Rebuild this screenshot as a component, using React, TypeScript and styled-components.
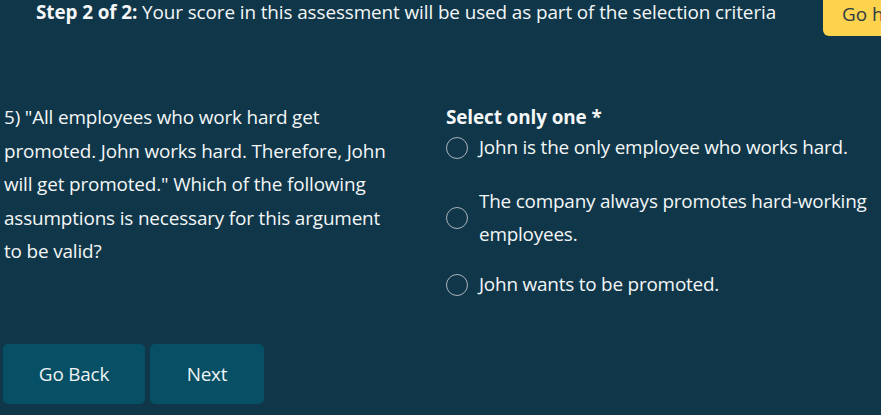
import React from "react";
import styled, { createGlobalStyle } from "styled-components";

const Global = createGlobalStyle`
  html, body { margin: 0; padding: 0; background: #0f3749; overflow: hidden; }
  body { font-family: "Open Sans", "Noto Sans", sans-serif; color: #f4f6f7; }
  * { box-sizing: border-box; }
`;

const Page = styled.div`
  width: 881px;
  height: 415px;
  background: #0f3749;
  overflow: hidden;
  display: flex;
  flex-direction: column;
`;

const Header = styled.header`
  display: flex;
  align-items: flex-start;
  justify-content: space-between;
  height: 36px;
`;

const StepText = styled.p`
  margin: 0;
  padding: 0 0 0 36px;
  font-size: 18.9px;
  line-height: 24px;
  letter-spacing: -0.1px;
  white-space: nowrap;
  b { font-weight: 700; }
`;

const HelpButton = styled.button`
  flex: none;
  width: 110px;
  height: 36px;
  margin-right: -52px;
  border: none;
  border-radius: 0 0 0 6px;
  background: #fdd34e;
  color: #2c3a45;
  font-family: inherit;
  font-size: 18.9px;
  text-align: left;
  padding: 0 0 9px 19px;
  white-space: nowrap;
  overflow: hidden;
`;

const Body = styled.main`
  display: grid;
  grid-template-columns: 442px 1fr;
  padding: 65px 0 0 4px;
`;

const Question = styled.p`
  margin: 0;
  width: 393px;
  font-size: 18.9px;
  line-height: 33.6px;
  letter-spacing: -0.15px;
`;

const Options = styled.fieldset`
  margin: 0;
  padding: 0;
  border: none;
  display: flex;
  flex-direction: column;
`;

const Legend = styled.legend`
  padding: 0;
  font-size: 18.9px;
  font-weight: 700;
  line-height: 33px;
  letter-spacing: -0.1px;
`;

const Option = styled.label<{ $top: number; $bottom: number }>`
  display: flex;
  align-items: center;
  gap: 11px;
  margin-top: ${(p) => p.$top}px;
  margin-bottom: ${(p) => p.$bottom}px;
`;

const Radio = styled.span`
  flex: none;
  width: 22px;
  height: 22px;
  border-radius: 50%;
  border: 1.5px solid #aab4b9;
`;

const OptionText = styled.span`
  font-size: 18.9px;
  line-height: 33px;
  letter-spacing: -0.2px;
  width: 395px;
`;

const Actions = styled.div`
  display: flex;
  gap: 5px;
  padding: 0 0 0 3px;
  margin-top: auto;
  margin-bottom: 11px;
`;

const NavButton = styled.button<{ $w: number }>`
  width: ${(p) => p.$w}px;
  height: 60px;
  border: none;
  border-radius: 5px;
  background: #074f64;
  color: #eef3f5;
  font-family: inherit;
  font-size: 18.9px;
  letter-spacing: -0.2px;
`;

export default function App() {
  return (
    <Page>
      <Global />
      <Header>
        <StepText>
          <b>Step 2 of 2:</b> Your score in this assessment will be used as part of the selection criteria
        </StepText>
        <HelpButton>Go home</HelpButton>
      </Header>
      <Body>
        <Question>
          5) "All employees who work hard get promoted. John works hard. Therefore, John will get promoted." Which of the following assumptions is necessary for this argument to be valid?
        </Question>
        <Options>
          <Legend>Select only one *</Legend>
          <Option $top={-3} $bottom={21}>
            <Radio />
            <OptionText>John is the only employee who works hard.</OptionText>
          </Option>
          <Option $top={0} $bottom={17}>
            <Radio />
            <OptionText>The company always promotes hard-working employees.</OptionText>
          </Option>
          <Option $top={0} $bottom={0}>
            <Radio />
            <OptionText>John wants to be promoted.</OptionText>
          </Option>
        </Options>
      </Body>
      <Actions>
        <NavButton $w={142}>Go Back</NavButton>
        <NavButton $w={114}>Next</NavButton>
      </Actions>
    </Page>
  );
}
